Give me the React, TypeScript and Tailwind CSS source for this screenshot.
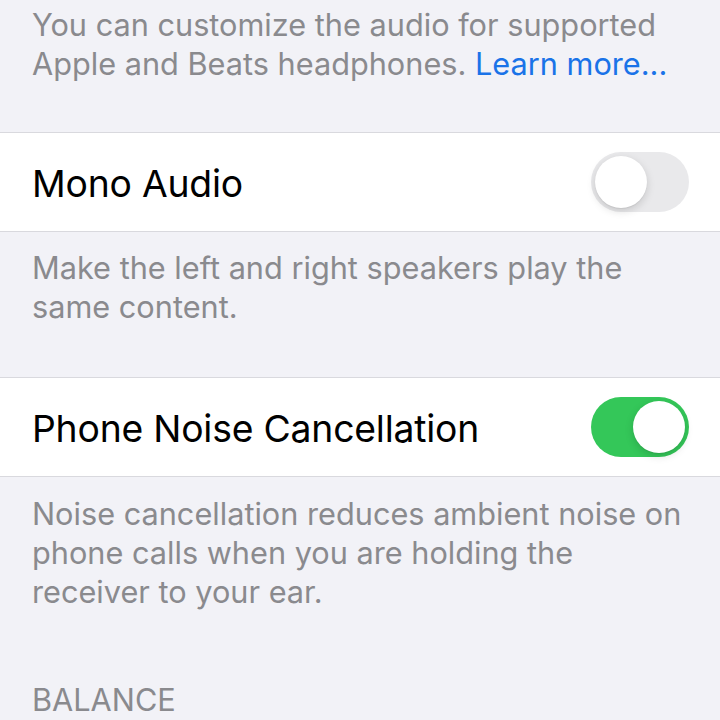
import { useState } from 'react'

function Toggle({ on, onChange }: { on: boolean; onChange: () => void }) {
  return (
    <button
      onClick={onChange}
      className={`relative w-[98px] h-[60px] rounded-full transition-colors ${
        on ? 'bg-[#34c759]' : 'bg-[#e9e9eb]'
      }`}
    >
      <span
        className={`absolute top-[4px] w-[52px] h-[52px] rounded-full bg-white shadow-[0_3px_8px_rgba(0,0,0,0.15),0_1px_1px_rgba(0,0,0,0.06)] transition-all ${
          on ? 'left-[42px]' : 'left-[4px]'
        }`}
      />
    </button>
  )
}

function Row({ label, on, onChange }: { label: string; on: boolean; onChange: () => void }) {
  return (
    <div className="bg-white border-y border-[#d9d9de] h-[100px] flex items-center justify-between pl-[32px] pr-[31px]">
      <span className="pt-[3px] text-[37.3px] text-black tracking-[-0.2px]">{label}</span>
      <Toggle on={on} onChange={onChange} />
    </div>
  )
}

export default function App() {
  const [mono, setMono] = useState(false)
  const [noise, setNoise] = useState(true)

  return (
    <div className="w-[720px] h-[720px] overflow-hidden bg-[#f2f2f7] font-['Inter',sans-serif]">
      <p className="px-[32px] pt-[5px] text-[30.7px] leading-[39px] text-[#8a8a8e] h-[132px]">
        You can customize the audio for supported
        <br />
        Apple and Beats headphones. <span className="text-[#1a73e8]">Learn more...</span>
      </p>

      <Row label="Mono Audio" on={mono} onChange={() => setMono(!mono)} />

      <p className="px-[32px] pt-[16px] text-[30.7px] leading-[39px] text-[#8a8a8e] h-[145px]">
        Make the left and right speakers play the
        <br />
        same content.
      </p>

      <Row label="Phone Noise Cancellation" on={noise} onChange={() => setNoise(!noise)} />

      <p className="px-[32px] pt-[17px] text-[30.7px] leading-[39px] text-[#8a8a8e] h-[203px]">
        Noise cancellation reduces ambient noise on
        <br />
        phone calls when you are holding the
        <br />
        receiver to your ear.
      </p>

      <p className="px-[32px] text-[30.7px] leading-[39px] text-[#8a8a8e]">BALANCE</p>
    </div>
  )
}
